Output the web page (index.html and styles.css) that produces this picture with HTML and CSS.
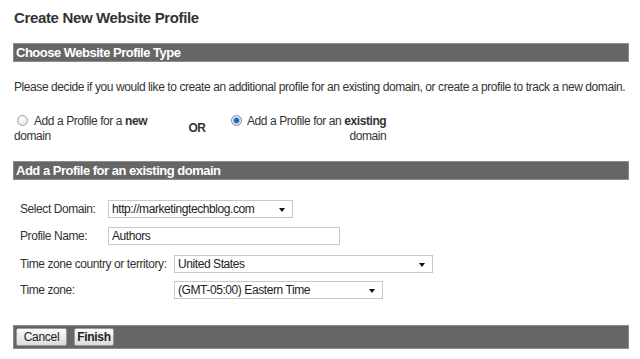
FILE: index.html
```html
<!DOCTYPE html>
<html>
<head>
<meta charset="utf-8">
<link rel="stylesheet" href="styles.css">
</head>
<body>
<div class="page">
  <h1 class="title">Create New Website Profile</h1>
  <div class="bar">Choose Website Profile Type</div>
  <p class="intro">Please decide if you would like to create an additional profile for an existing domain, or create a profile to track a new domain.</p>
  <div class="choice">
    <label class="opt opt-new"><span class="radio"></span>Add a Profile for a <b>new</b><br>domain</label>
    <div class="or">OR</div>
    <label class="opt opt-existing"><span class="radio checked"></span>Add a Profile for an <b>existing</b><br>domain</label>
  </div>
  <div class="bar">Add a Profile for an existing domain</div>
  <div class="form">
    <div class="grp grp1">
      <span class="lbl">Select Domain:</span>
      <span class="sel sel-domain"><span class="val">http://marketingtechblog.com</span><span class="arrow"></span></span>
      <span class="lbl">Profile Name:</span>
      <span class="inp">Authors</span>
    </div>
    <div class="grp grp2">
      <span class="lbl">Time zone country or territory:</span>
      <span class="sel sel-country"><span class="val">United States</span><span class="arrow"></span></span>
      <span class="lbl">Time zone:</span>
      <span class="sel sel-tz"><span class="val">(GMT-05:00) Eastern Time</span><span class="arrow"></span></span>
    </div>
  </div>
  <div class="bar footer">
    <button class="btn btn-cancel">Cancel</button>
    <button class="btn btn-strong">Finish</button>
  </div>
</div>
</body>
</html>
```

FILE: styles.css
```css
html, body {
  margin: 0;
  padding: 0;
  background: #fff;
}
body {
  font-family: "Liberation Sans", Arial, sans-serif;
  font-size: 12px;
  letter-spacing: -0.42px;
  color: #333;
}
.page {
  width: 616px;
  padding: 9px 0 0 13px;
}
.title {
  margin: 0 0 0 1px;
  font-size: 15px;
  font-weight: bold;
  line-height: 18px;
  letter-spacing: -0.35px;
  color: #333;
}
.bar {
  margin-top: 16px;
  height: 17px;
  background: #666;
  border: 1px solid #8c8c8c;
  color: #fff;
  font-weight: bold;
  font-size: 13px;
  letter-spacing: -0.5px;
  line-height: 17px;
  padding-left: 2px;
}
.intro {
  margin: 18px 0 0 1px;
  line-height: 14px;
  white-space: nowrap;
  color: #333;
}
.choice {
  display: grid;
  grid-template-columns: 151px 66px max-content;
  margin: 20px 0 0 1px;
  line-height: 15px;
  color: #333;
}
.opt {
  white-space: nowrap;
}
.opt-existing {
  text-align: right;
}
.or {
  font-weight: bold;
  text-align: center;
  padding-top: 7px;
  margin-left: -2px;
}
.radio {
  display: inline-block;
  width: 11px;
  height: 11px;
  border-radius: 50%;
  border: 1px solid #a0a0a0;
  background: radial-gradient(circle at 40% 35%, #fff, #ddd);
  box-sizing: border-box;
  vertical-align: -1px;
  margin: 0 6px 0 3px;
}
.opt-existing .radio {
  margin: 0 5px 0 0;
}
.radio.checked {
  background: radial-gradient(circle at 50% 50%, #1a5a9a 0, #2a7ac8 2.5px, #dfe9f3 3.5px, #f4f4f4 100%);
  border-color: #7a8a9a;
}
.choice + .bar {
  margin-top: 17px;
}
.form {
  padding: 20px 0 0 7px;
}
.grp {
  display: grid;
  align-items: center;
  justify-items: start;
}
.grp1 {
  grid-template-columns: 88px auto;
  row-gap: 9px;
}
.grp2 {
  grid-template-columns: 154px auto;
  row-gap: 8px;
  margin-top: 10px;
}
.lbl {
  white-space: nowrap;
  color: #333;
}
.sel, .inp {
  position: relative;
  display: block;
  height: 18px;
  box-sizing: border-box;
  border: 1px solid #c8c8c8;
  background: #fff;
  color: #222;
  line-height: 16px;
  padding-left: 3px;
}
.sel-domain { width: 185px; }
.inp { width: 232px; }
.sel-country { width: 259px; }
.sel-tz { width: 209px; }
.arrow {
  position: absolute;
  right: 7px;
  top: 7px;
  width: 0;
  height: 0;
  border-left: 3px solid transparent;
  border-right: 3px solid transparent;
  border-top: 4px solid #111;
}
.bar.footer {
  margin-top: 26px;
  height: 22px;
  padding: 0 0 0 2px;
  display: flex;
  align-items: center;
  gap: 7px;
}
.btn {
  height: 18px;
  padding: 0;
  font-family: "Liberation Sans", Arial, sans-serif;
  font-size: 12px;
  letter-spacing: -0.3px;
  font-weight: normal;
  color: #222;
  border: 1px solid #9a9a9a;
  border-radius: 2px;
  background: linear-gradient(#fbfbfb, #dcdcdc);
  line-height: 16px;
}
.btn-cancel { width: 51px; }
.btn-strong {
  width: 40px;
  font-weight: bold;
}
```
